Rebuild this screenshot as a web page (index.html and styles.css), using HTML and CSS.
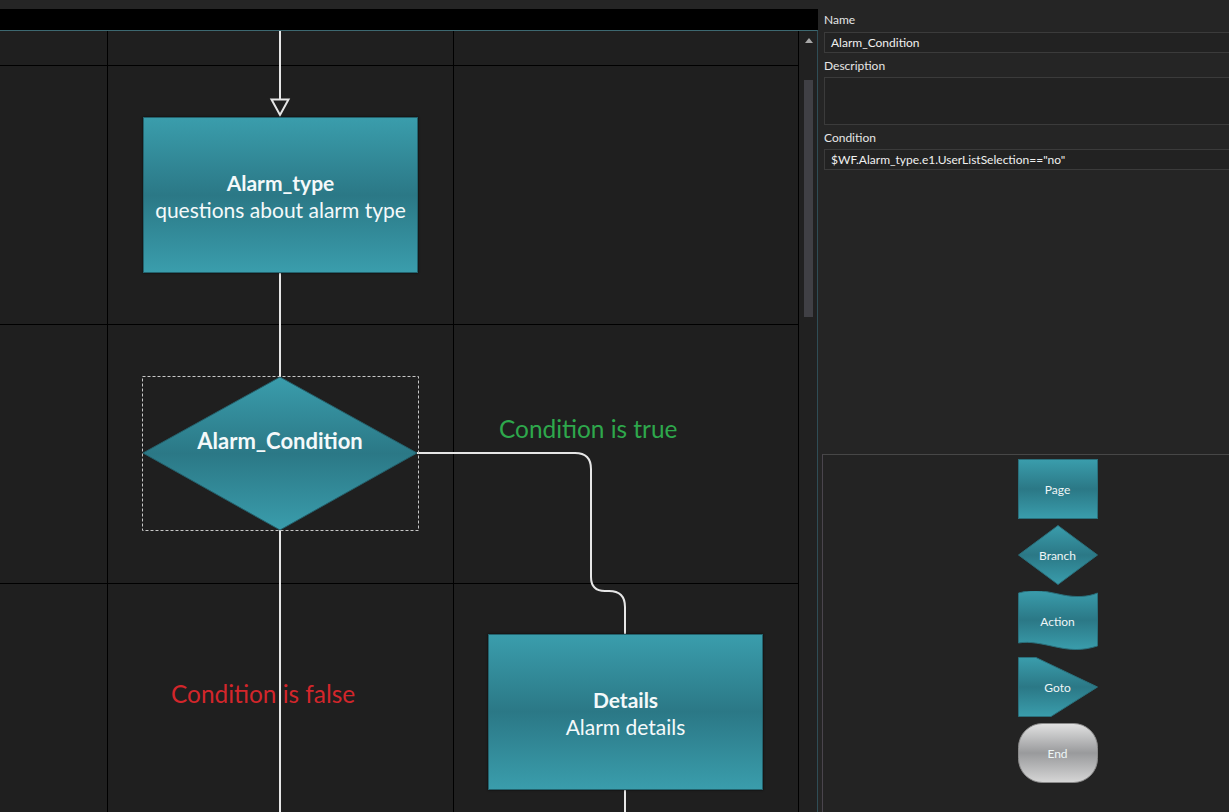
FILE: index.html
```html
<!DOCTYPE html>
<html>
<head>
<meta charset="utf-8">
<title>Workflow editor</title>
<link rel="stylesheet" href="styles.css">
</head>
<body>
<div class="app">
  <div class="editor">
    <div class="toolbar"></div>
    <div class="workspace">
      <div class="canvas">
        <svg class="wires" width="798" height="781" viewBox="0 31 798 781">
          <defs>
            <linearGradient id="teal" x1="0" y1="0" x2="0" y2="1">
              <stop offset="0" stop-color="#3a9dac"/>
              <stop offset="0.5" stop-color="#2b7886"/>
              <stop offset="1" stop-color="#3a9dac"/>
            </linearGradient>
          </defs>
          <path class="wire" d="M280 31 V99"/>
          <polygon class="arrow" points="271.5,99.5 288.5,99.5 280,115"/>
          <path class="wire" d="M280 272 V377"/>
          <path class="wire" d="M417 453 H575 Q591 453 591 469 V577 Q591 591 605 591 H609 Q625 591 625 607 V634"/>
          <path class="wire" d="M280 530 V812"/>
          <path class="wire" d="M625 789 V812"/>
          <polygon class="diamond" points="280,377 417,453 280,530 143,453"/>
          <rect class="select" x="142.5" y="376.5" width="276" height="154"/>
        </svg>
        <div class="node page-node n-alarm-type">
          <b>Alarm_type</b>
          <span>questions about alarm type</span>
        </div>
        <div class="node branch-label n-condition">
          <b>Alarm_Condition</b>
        </div>
        <div class="node page-node n-details">
          <b>Details</b>
          <span>Alarm details</span>
        </div>
        <div class="note note-true">Condition is true</div>
        <div class="note note-false">Condition is false</div>
      </div>
      <div class="scrollbar">
        <div class="scroll-up"></div>
        <div class="scroll-thumb"></div>
      </div>
    </div>
  </div>
  <aside class="props">
    <div class="label">Name</div>
    <div class="field">Alarm_Condition</div>
    <div class="label">Description</div>
    <div class="field area"></div>
    <div class="label">Condition</div>
    <div class="field">$WF.Alarm_type.e1.UserListSelection=="no"</div>
    <div class="toolbox">
      <div class="tool">
        <svg viewBox="0 0 80 60" preserveAspectRatio="none"><defs><linearGradient id="tg1" x1="0" y1="0" x2="0" y2="1"><stop offset="0" stop-color="#3a9dac"/><stop offset="0.5" stop-color="#2b7886"/><stop offset="1" stop-color="#3a9dac"/></linearGradient></defs><rect x="0.5" y="0.5" width="79" height="59" fill="url(#tg1)" stroke="#2a6f7b"/></svg>
        <span>Page</span>
      </div>
      <div class="tool">
        <svg viewBox="0 0 80 60" preserveAspectRatio="none"><polygon points="40,0.5 79.5,30 40,59.5 0.5,30" fill="url(#tg1)" stroke="#2a6f7b"/></svg>
        <span>Branch</span>
      </div>
      <div class="tool">
        <svg viewBox="0 0 80 60" preserveAspectRatio="none"><path d="M0.5 2 C18 -3 30 1 45 4 C58 6.5 70 6 79.5 2 V55 C64 60 52 59 38 56 C24 53 12 50 0.5 52 Z" fill="url(#tg1)" stroke="#2a6f7b"/></svg>
        <span>Action</span>
      </div>
      <div class="tool">
        <svg viewBox="0 0 80 60" preserveAspectRatio="none"><polygon points="0.5,0.5 18,0.5 79.5,30 33,59.5 0.5,59.5" fill="url(#tg1)" stroke="#2a6f7b"/></svg>
        <span>Goto</span>
      </div>
      <div class="tool">
        <svg viewBox="0 0 80 60" preserveAspectRatio="none"><defs><linearGradient id="tg2" x1="0" y1="0" x2="0" y2="1"><stop offset="0" stop-color="#e2e2e2"/><stop offset="0.5" stop-color="#999a9c"/><stop offset="1" stop-color="#d6d6d6"/></linearGradient></defs><rect x="0.5" y="0.5" width="79" height="59" rx="24" ry="24" fill="url(#tg2)" stroke="#8a8a8a"/></svg>
        <span>End</span>
      </div>
    </div>
  </aside>
</div>
</body>
</html>
```

FILE: styles.css
```css
html, body {
  margin: 0;
  padding: 0;
  background: #252525;
  overflow: hidden;
}

.app {
  display: flex;
  width: 1229px;
  height: 812px;
  font-family: "Lato", "Noto Sans", sans-serif;
}

.editor {
  width: 818px;
  flex: none;
  display: flex;
  flex-direction: column;
  padding-top: 9px;
  box-sizing: border-box;
}

.toolbar {
  height: 21px;
  background: #000;
  flex: none;
}

.workspace {
  flex: 1;
  display: flex;
  border-top: 1px solid #3d6870;
  border-right: 1px solid #2f4d56;
  min-height: 0;
}

.canvas {
  position: relative;
  width: 798px;
  flex: none;
  border-right: 1px solid #000;
  background-color: #1f1f1f;
  background-image:
    linear-gradient(to right, #000 1px, transparent 1px),
    linear-gradient(to bottom, #000 1px, transparent 1px);
  background-size: 346px 100%, 100% 259px;
  background-position: 107px 0, 0 34px;
  overflow: hidden;
}

.wires {
  position: absolute;
  left: 0;
  top: 0;
}

.wire {
  fill: none;
  stroke: #e6e6e6;
  stroke-width: 2;
}

.arrow {
  fill: #1f1f1f;
  stroke: #e6e6e6;
  stroke-width: 2;
  stroke-linejoin: miter;
}

.diamond {
  fill: url(#teal);
  stroke: #25606b;
  stroke-width: 1;
}

.select {
  fill: none;
  stroke: #c8c8c8;
  stroke-width: 1;
  stroke-dasharray: 3 2;
}

.node {
  position: absolute;
  display: flex;
  flex-direction: column;
  align-items: center;
  justify-content: center;
  color: #f4f9fa;
  box-sizing: border-box;
  text-align: center;
}

.node b {
  font-size: 21px;
  line-height: 27px;
  font-weight: 700;
}

.node span {
  font-size: 21px;
  line-height: 27px;
}

.page-node {
  width: 275px;
  height: 156px;
  border: 1px solid #23626d;
  background: linear-gradient(#3a9dac, #2b7886 50%, #3a9dac);
  box-shadow: 0 0 2px rgba(0, 0, 0, 0.8);
  padding-top: 2px;
}

.n-alarm-type {
  left: 143px;
  top: 86px;
}

.n-details {
  left: 488px;
  top: 603px;
}

.n-condition {
  left: 143px;
  top: 396px;
  width: 274px;
  height: 26px;
}

.n-condition b {
  font-size: 22px;
}

.note {
  position: absolute;
  font-size: 24.4px;
  line-height: 28px;
  white-space: nowrap;
}

.note-true {
  left: 499px;
  top: 384px;
  color: #2ea84c;
}

.note-false {
  left: 171px;
  top: 649px;
  color: #d3262b;
}

.scrollbar {
  flex: 1;
  background: #212121;
  display: flex;
  flex-direction: column;
  align-items: center;
  padding-top: 7px;
}

.scroll-up {
  width: 0;
  height: 0;
  border-left: 4px solid transparent;
  border-right: 4px solid transparent;
  border-bottom: 5px solid #a8a8a8;
  margin-left: 1px;
}

.scroll-thumb {
  width: 9px;
  height: 237px;
  margin-top: 37px;
  margin-left: 1px;
  background: #404045;
}

.props {
  flex: 1;
  min-width: 0;
  overflow: hidden;
  display: flex;
  flex-direction: column;
  padding: 8px 0 0 6px;
  color: #e4e4e4;
  font-size: 12px;
}

.label {
  height: 24px;
  line-height: 24px;
  font-size: 12px;
  color: #e6e6e6;
}

.label:not(:first-child) {
  line-height: 26px;
}

.field {
  width: 420px;
  flex: none;
  height: 21px;
  box-sizing: border-box;
  border: 1px solid #3b3b3b;
  background: #222;
  padding-left: 6px;
  line-height: 19px;
  font-size: 12px;
  color: #f0f0f0;
  white-space: nowrap;
}

.field.area {
  height: 48px;
}

.toolbox {
  margin-top: auto;
  margin-left: -2px;
  width: 470px;
  height: 358px;
  flex: none;
  box-sizing: border-box;
  border-top: 1px solid #474747;
  border-left: 1px solid #4a454d;
  background: #232323;
  display: flex;
  flex-direction: column;
  align-items: center;
  gap: 6px;
  padding-top: 4px;
}

.tool {
  position: relative;
  width: 80px;
  height: 60px;
  display: flex;
  align-items: center;
  justify-content: center;
  flex: none;
}

.tool svg {
  position: absolute;
  inset: 0;
  width: 80px;
  height: 60px;
}

.tool span {
  position: relative;
  font-size: 12px;
  color: #eef6f7;
}
```
